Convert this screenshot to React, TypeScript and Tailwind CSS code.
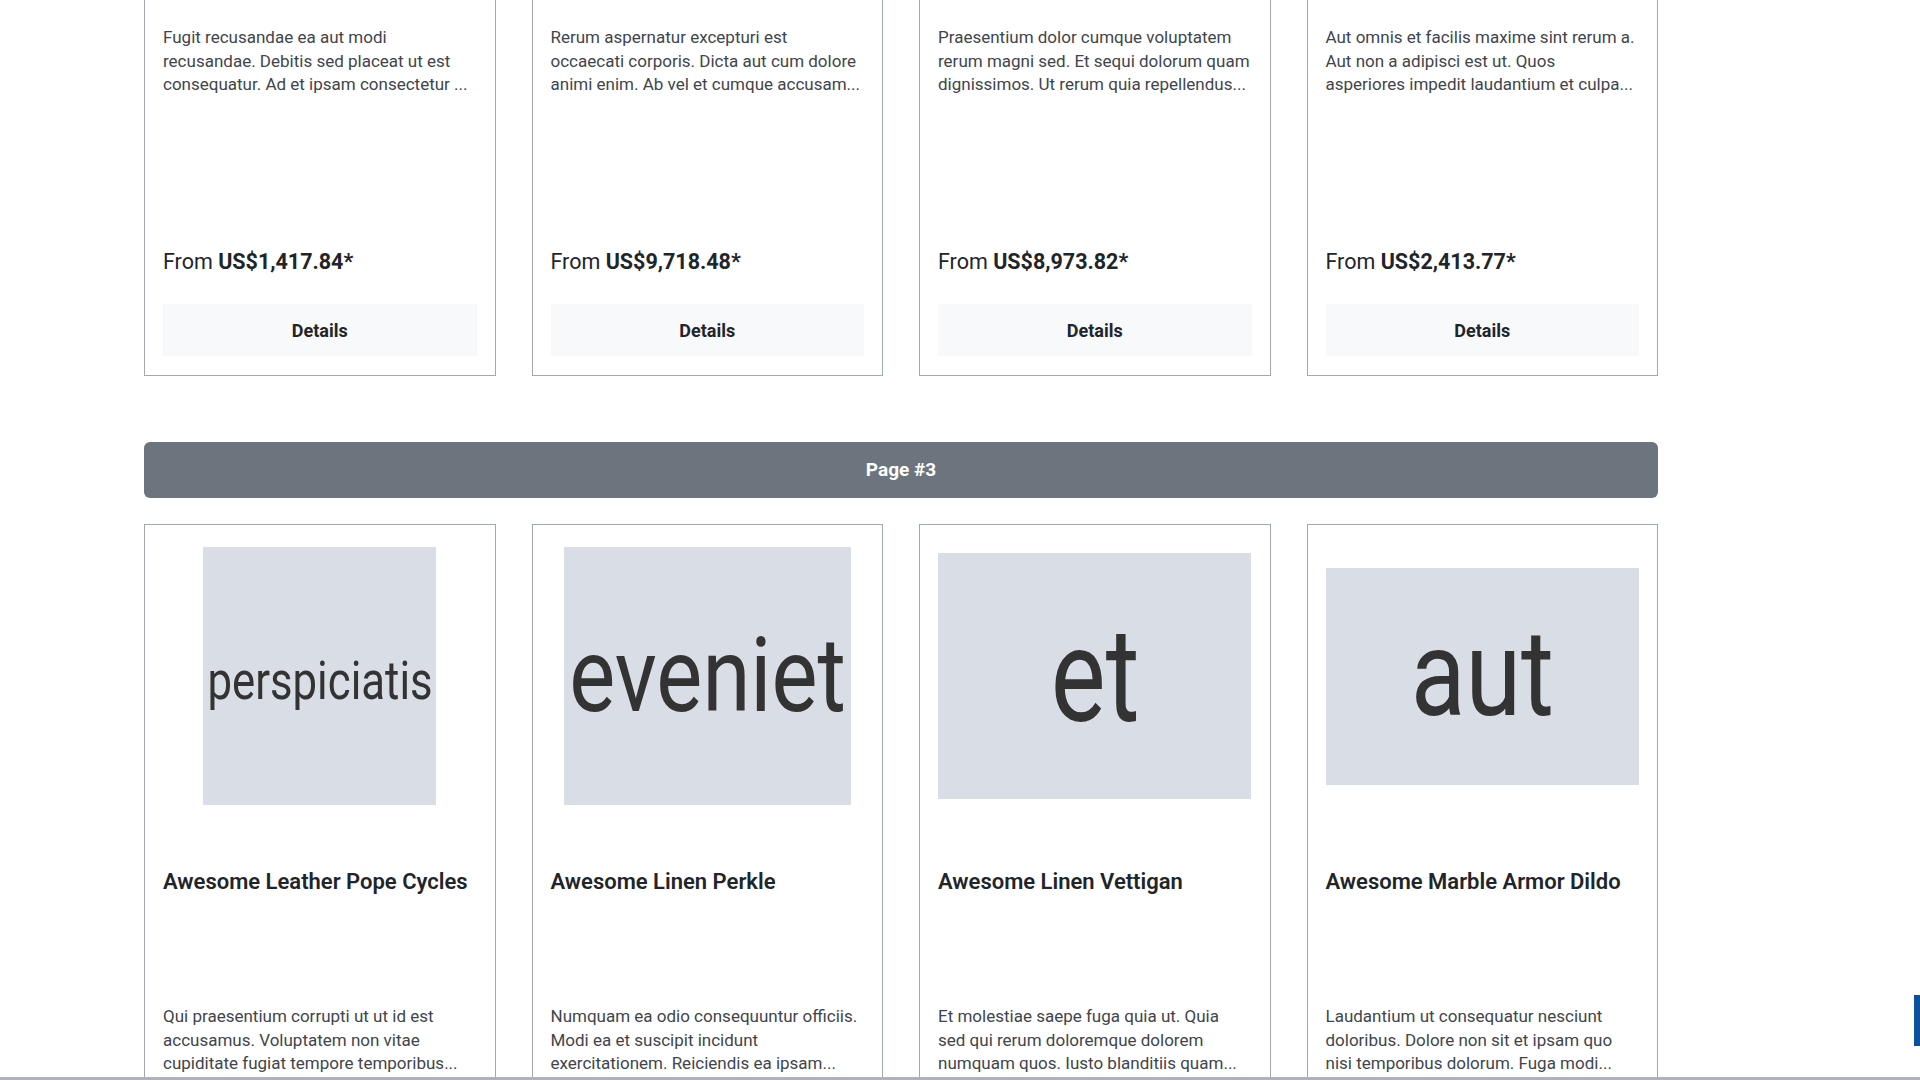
import React from 'react'

type Product = {
  id: number
  name: string
  price: string
  lines: string[]
  word: string
  box: string
  wordCls: string
}

// tail of page #2: only the lower half of these cards is scrolled into view
const pageTwo: Product[] = [
  {
    id: 5,
    name: '',
    price: 'US$1,417.84*',
    lines: [
      'Fugit recusandae ea aut modi',
      'recusandae. Debitis sed placeat ut est',
      'consequatur. Ad et ipsam consectetur ...',
    ],
    word: '',
    box: 'w-[280px] h-[240px]',
    wordCls: '',
  },
  {
    id: 6,
    name: '',
    price: 'US$9,718.48*',
    lines: [
      'Rerum aspernatur excepturi est',
      'occaecati corporis. Dicta aut cum dolore',
      'animi enim. Ab vel et cumque accusam...',
    ],
    word: '',
    box: 'w-[300px] h-[230px]',
    wordCls: '',
  },
  {
    id: 7,
    name: '',
    price: 'US$8,973.82*',
    lines: [
      'Praesentium dolor cumque voluptatem',
      'rerum magni sed. Et sequi dolorum quam',
      'dignissimos. Ut rerum quia repellendus...',
    ],
    word: '',
    box: 'w-[250px] h-[258px]',
    wordCls: '',
  },
  {
    id: 8,
    name: '',
    price: 'US$2,413.77*',
    lines: [
      'Aut omnis et facilis maxime sint rerum a.',
      'Aut non a adipisci est ut. Quos',
      'asperiores impedit laudantium et culpa...',
    ],
    word: '',
    box: 'w-[313px] h-[220px]',
    wordCls: '',
  },
]

const pageThree: Product[] = [
  {
    id: 9,
    name: 'Awesome Leather Pope Cycles',
    price: 'US$3,204.15*',
    lines: [
      'Qui praesentium corrupti ut ut id est',
      'accusamus. Voluptatem non vitae',
      'cupiditate fugiat tempore temporibus...',
    ],
    word: 'perspiciatis',
    box: 'w-[233px] h-[258px]',
    wordCls: 'text-[54px] scale-x-[0.81] translate-y-[5px]',
  },
  {
    id: 10,
    name: 'Awesome Linen Perkle',
    price: 'US$6,581.40*',
    lines: [
      'Numquam ea odio consequuntur officiis.',
      'Modi ea et suscipit incidunt',
      'exercitationem. Reiciendis ea ipsam...',
    ],
    word: 'eveniet',
    box: 'w-[287px] h-[258px]',
    wordCls: 'text-[104px] scale-x-[0.835]',
  },
  {
    id: 11,
    name: 'Awesome Linen Vettigan',
    price: 'US$7,039.62*',
    lines: [
      'Et molestiae saepe fuga quia ut. Quia',
      'sed qui rerum doloremque dolorem',
      'numquam quos. Iusto blanditiis quam...',
    ],
    word: 'et',
    box: 'w-[313px] h-[246px]',
    wordCls: 'text-[131px] scale-x-[0.79]',
  },
  {
    id: 12,
    name: 'Awesome Marble Armor Dildo',
    price: 'US$1,896.23*',
    lines: [
      'Laudantium ut consequatur nesciunt',
      'doloribus. Dolore non sit et ipsam quo',
      'nisi temporibus dolorum. Fuga modi...',
    ],
    word: 'aut',
    box: 'w-[314px] h-[217px]',
    wordCls: 'text-[120px] scale-x-[0.84] translate-y-[-2px]',
  },
]

function Placeholder({ p }: { p: Product }) {
  return (
    <div className={`flex items-center justify-center bg-[#d9dde5] ${p.box}`}>
      <span className={`block leading-none text-[#333333] ${p.wordCls}`}>{p.word}</span>
    </div>
  )
}

function ProductCard({ p }: { p: Product }) {
  return (
    <div className="flex flex-col border border-[#a2a8b1] bg-white px-[18px] pt-[18px] pb-[19px]">
      <div className="flex h-[266px] items-center justify-center">
        <Placeholder p={p} />
      </div>
      <h3 className="mt-[60px] h-[136px] text-[22px] leading-[26px] font-semibold text-[#212529]">
        {p.name}
      </h3>
      <div className="h-[223px] text-[17px] leading-[23.5px] text-[#3f454b]">
        {p.lines.map((l) => (
          <div key={l} className="whitespace-nowrap">
            {l}
          </div>
        ))}
      </div>
      <div className="h-[26px] text-[21.5px] leading-[26px] text-[#212529]">
        From <span className="font-bold">{p.price}</span>
      </div>
      <button className="mt-[29px] h-[52px] w-full bg-[#f8f9fa] text-[18px] font-bold text-[#212529]">
        Details
      </button>
    </div>
  )
}

export default function App() {
  return (
    <div className="h-screen overflow-hidden bg-white font-[Roboto]">
      {/* scrolled listing: page #2 tail, divider, page #3 */}
      <div className="ml-[144px] mt-[-455px] w-[1514px]">
        <div className="grid grid-cols-4 gap-x-[36px]">
          {pageTwo.map((p) => (
            <ProductCard key={p.id} p={p} />
          ))}
        </div>

        <div className="mt-[66px] flex h-[56px] items-center justify-center rounded-md bg-[#6c757d] text-[19px] font-bold text-white">
          Page #3
        </div>

        <div className="mt-[26px] grid grid-cols-4 gap-x-[36px]">
          {pageThree.map((p) => (
            <ProductCard key={p.id} p={p} />
          ))}
        </div>
      </div>

      {/* feedback tab peeking in from the right edge */}
      <div className="fixed right-0 top-[995px] h-[51px] w-[6px] bg-[#0c519e]" />
      <div className="fixed inset-x-0 bottom-0 h-[3px] bg-[#aeb3bb]" />
    </div>
  )
}
